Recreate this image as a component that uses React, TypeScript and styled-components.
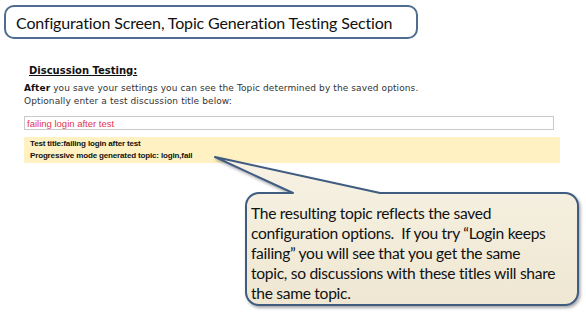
import React, { FC } from "react";
import styled, { createGlobalStyle } from "styled-components";

const GlobalStyle = createGlobalStyle`
  html, body {
    margin: 0;
    padding: 0;
    background: #ffffff;
  }
  body {
    width: 586px;
    height: 315px;
    overflow: hidden;
  }
`;

const Page = styled.div`
  display: flex;
  flex-direction: column;
  width: 586px;
  height: 315px;
  font-family: "DejaVu Sans", Verdana, sans-serif;
`;

const TitleBox = styled.div`
  box-sizing: border-box;
  margin: 5px 0 0 4px;
  width: 414px;
  height: 34px;
  border: 2px solid #4f6d91;
  border-radius: 10px;
  padding-left: 10px;
  display: flex;
  align-items: center;
  white-space: nowrap;
  font-family: Lato, "Open Sans", sans-serif;
  font-size: 16px;
  letter-spacing: -0.15px;
  color: #111;
`;

const Section = styled.section`
  display: flex;
  flex-direction: column;
  padding-left: 24px;
  margin-top: 26px;
`;

const Heading = styled.h2`
  margin: 0 0 0 5px;
  font-size: 10px;
  font-weight: bold;
  text-decoration: underline;
  color: #111;
`;

const Intro = styled.p`
  margin: 6px 0 0;
  font-size: 9px;
  line-height: 13px;
  letter-spacing: 0.1px;
  color: #333;

  b {
    color: #111;
  }
`;

const TestInput = styled.input`
  box-sizing: border-box;
  margin: 8px 0 0;
  width: 530px;
  height: 14px;
  border: 1px solid #c9c9c9;
  padding: 0 2px;
  font-family: "Liberation Sans", Arial, sans-serif;
  font-size: 9.5px;
  color: #e2374e;
  outline: none;
`;

const ResultBox = styled.div`
  box-sizing: border-box;
  margin-top: 7px;
  width: 536px;
  height: 26px;
  background: #fff1c2;
  padding: 1px 0 0 6px;
  font-family: "Liberation Sans", Arial, sans-serif;
  font-size: 8px;
  font-weight: bold;
  letter-spacing: -0.15px;
  line-height: 12px;
  color: #111;
`;

const Callout = styled.div`
  position: relative;
  box-sizing: border-box;
  margin: 30px 0 0 246px;
  width: 332px;
  height: 112px;
  padding: 10px 0 0 5px;
`;

const CalloutShape = styled.svg`
  position: absolute;
  left: -35px;
  top: -40px;
  overflow: visible;
`;

const CalloutText = styled.p`
  position: relative;
  margin: 0;
  white-space: nowrap;
  font-family: Lato, "Open Sans", sans-serif;
  font-size: 15.6px;
  letter-spacing: -0.3px;
  line-height: 20px;
  color: #111;
`;

const CalloutBubble: FC<{ lines: string[] }> = ({ lines }) => (
  <Callout>
    <CalloutShape width={375} height={160} viewBox="-35 -40 375 160">
      <defs>
        <linearGradient id="bubbleFill" x1="0" y1="0" x2="0" y2="1">
          <stop offset="0" stopColor="#f7f2e4" />
          <stop offset="1" stopColor="#efe7d2" />
        </linearGradient>
        <filter id="bubbleShadow" x="-10%" y="-10%" width="120%" height="130%">
          <feDropShadow dx="1.5" dy="2" stdDeviation="1.5" floodColor="#000" floodOpacity="0.35" />
        </filter>
      </defs>
      <path
        d="M13,0 L47,0 L-31,-36 L134,0 L319,0 A13,13 0 0 1 332,13 L332,99 A13,13 0 0 1 319,112 L13,112 A13,13 0 0 1 0,99 L0,13 A13,13 0 0 1 13,0 Z"
        fill="url(#bubbleFill)"
        stroke="#3f5b80"
        strokeWidth={2}
        strokeLinejoin="round"
        filter="url(#bubbleShadow)"
      />
    </CalloutShape>
    <CalloutText>
      {lines.map((line, i) => (
        <React.Fragment key={i}>
          {line}
          {i < lines.length - 1 && <br />}
        </React.Fragment>
      ))}
    </CalloutText>
  </Callout>
);

const calloutLines = [
  "The resulting topic reflects the saved",
  "configuration options.\u00a0 If you try “Login keeps",
  "failing” you will see that you get the same",
  "topic, so discussions with these titles will share",
  "the same topic.",
];

export default function App() {
  return (
    <Page>
      <GlobalStyle />
      <TitleBox>Configuration Screen, Topic Generation Testing Section</TitleBox>
      <Section>
        <Heading>Discussion Testing:</Heading>
        <Intro>
          <b>After</b> you save your settings you can see the Topic determined by the saved options.
          <br />
          Optionally enter a test discussion title below:
        </Intro>
        <TestInput defaultValue="failing login after test" />
        <ResultBox>
          Test title:failing login after test
          <br />
          Progressive mode generated topic: login,fail
        </ResultBox>
      </Section>
      <CalloutBubble lines={calloutLines} />
    </Page>
  );
}
